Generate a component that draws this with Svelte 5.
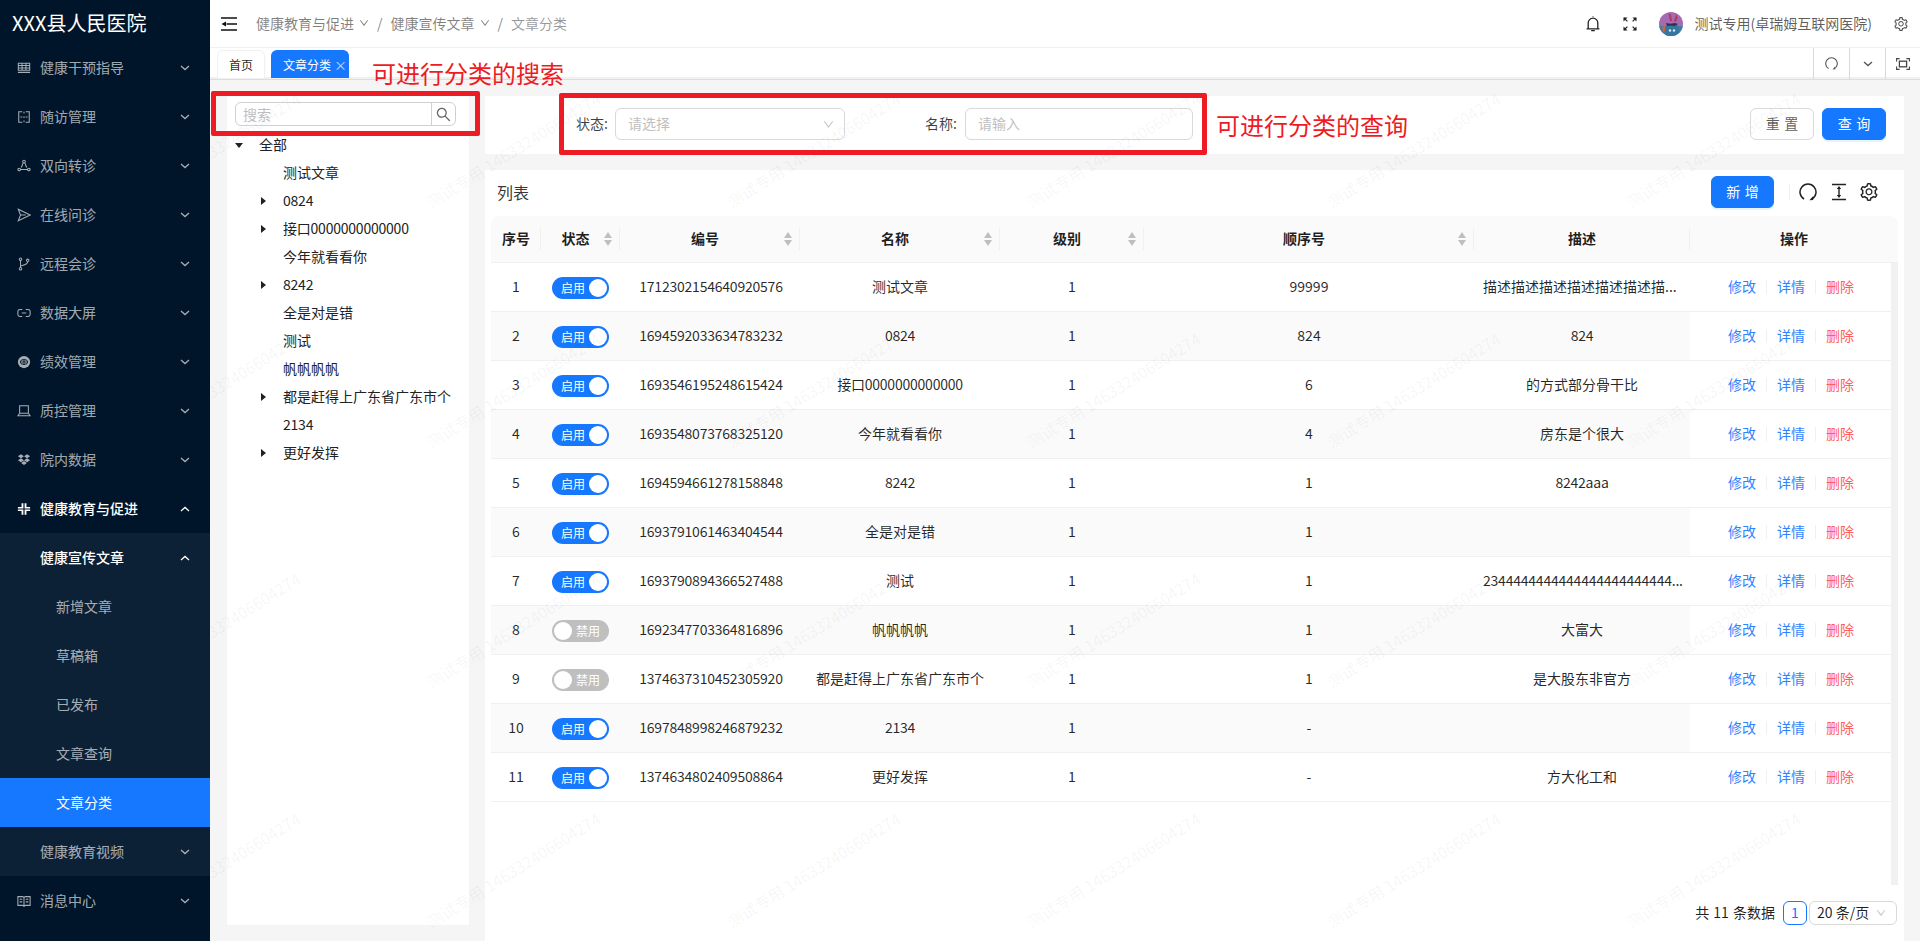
<script lang="ts">
	// sidebar icons, 16x16, stroked unless drawn inline in the markup
	const icons: Record<string, string> = {
		table: 'M1.5 2.5h13v8h-13z M1.5 5.2h13 M1.5 7.9h13 M5.8 2.5v8 M10.2 2.5v8 M1 13h14',
		split: 'M6 2H2v12h4 M10 2h4v12h-4 M8 2v2 M8 7v2 M8 12v2 M4 8h2 M10 8h2',
		deploy: 'M6.8 5L5 9.7 M9.2 5L11 9.7 M4.3 12h7.4 M9.5 3a1.5 1.5 0 1 1-3 0 1.5 1.5 0 0 1 3 0z M4 12a1.5 1.5 0 1 1-3 0 1.5 1.5 0 0 1 3 0z M15 12a1.5 1.5 0 1 1-3 0 1.5 1.5 0 0 1 3 0z',
		send: 'M1.5 1.5L15 8 1.5 14.5 4 8z M4 8h6',
		branch: 'M4 4v8 M12.2 5.3c0 3.2-4.2 3.7-8.2 5 M5.4 2.6a1.4 1.4 0 1 1-2.8 0 1.4 1.4 0 0 1 2.8 0z M5.4 13.4a1.4 1.4 0 1 1-2.8 0 1.4 1.4 0 0 1 2.8 0z M13.6 3.8a1.4 1.4 0 1 1-2.8 0 1.4 1.4 0 0 1 2.8 0z',
		link: 'M6 4H3.2A2.2 2.2 0 0 0 1 6.2v3.6A2.2 2.2 0 0 0 3.2 12H6 M10 4h2.8A2.2 2.2 0 0 1 15 6.2v3.6a2.2 2.2 0 0 1-2.2 2.2H10 M5.5 8h5',
		laptop: 'M3 2h10v8.5H3z M3 10.5L1 13.5h14l-2-3',
		book: 'M1 3h5.5L8 4l1.5-1H15v10H9.5L8 14l-1.5-1H1z M8 4v10 M3 6h3 M3 9h3 M10 6h3 M10 9h3'
	};

	const menu = [
		{ label: '健康干预指导', icon: 'table' },
		{ label: '随访管理', icon: 'split' },
		{ label: '双向转诊', icon: 'deploy' },
		{ label: '在线问诊', icon: 'send' },
		{ label: '远程会诊', icon: 'branch' },
		{ label: '数据大屏', icon: 'link' },
		{ label: '绩效管理', icon: 'coin' },
		{ label: '质控管理', icon: 'laptop' },
		{ label: '院内数据', icon: 'dropbox' },
		{ label: '健康教育与促进', icon: 'slack', open: true },
		{ label: '健康宣传文章', sub: true, open: true },
		{ label: '新增文章', sub: true, leaf: true },
		{ label: '草稿箱', sub: true, leaf: true },
		{ label: '已发布', sub: true, leaf: true },
		{ label: '文章查询', sub: true, leaf: true },
		{ label: '文章分类', sub: true, leaf: true, active: true },
		{ label: '健康教育视频', sub: true },
		{ label: '消息中心', icon: 'book' }
	];

	const tree = [
		{ label: '全部', depth: 0, caret: 'down' },
		{ label: '测试文章', depth: 1 },
		{ label: '0824', depth: 1, caret: 'right' },
		{ label: '接口0000000000000', depth: 1, caret: 'right' },
		{ label: '今年就看看你', depth: 1 },
		{ label: '8242', depth: 1, caret: 'right' },
		{ label: '全是对是错', depth: 1 },
		{ label: '测试', depth: 1 },
		{ label: '帆帆帆帆', depth: 1 },
		{ label: '都是赶得上广东省广东市个', depth: 1, caret: 'right' },
		{ label: '2134', depth: 1 },
		{ label: '更好发挥', depth: 1, caret: 'right' }
	];

	const columns = [
		{ title: '序号', width: 50 },
		{ title: '状态', width: 79, sort: true },
		{ title: '编号', width: 180, sort: true },
		{ title: '名称', width: 200, sort: true },
		{ title: '级别', width: 144, sort: true },
		{ title: '顺序号', width: 330, sort: true },
		{ title: '描述', width: 216 },
		{ title: '操作', width: 201 }
	];

	const rows = [
		{ on: true, code: '1712302154640920576', name: '测试文章', level: '1', order: '99999', desc: '描述描述描述描述描述描述描...' },
		{ on: true, code: '1694592033634783232', name: '0824', level: '1', order: '824', desc: '824' },
		{ on: true, code: '1693546195248615424', name: '接口0000000000000', level: '1', order: '6', desc: '的方式部分骨干比' },
		{ on: true, code: '1693548073768325120', name: '今年就看看你', level: '1', order: '4', desc: '房东是个很大' },
		{ on: true, code: '1694594661278158848', name: '8242', level: '1', order: '1', desc: '8242aaa' },
		{ on: true, code: '1693791061463404544', name: '全是对是错', level: '1', order: '1', desc: '' },
		{ on: true, code: '1693790894366527488', name: '测试', level: '1', order: '1', desc: '2344444444444444444444444...' },
		{ on: false, code: '1692347703364816896', name: '帆帆帆帆', level: '1', order: '1', desc: '大富大' },
		{ on: false, code: '1374637310452305920', name: '都是赶得上广东省广东市个', level: '1', order: '1', desc: '是大股东非官方' },
		{ on: true, code: '1697848998246879232', name: '2134', level: '1', order: '-', desc: '' },
		{ on: true, code: '1374634802409508864', name: '更好发挥', level: '1', order: '-', desc: '方大化工和' }
	];

	// watermark tiles, measured from the content area's top-left corner
	const watermarks: { left: number; top: number }[] = [];
	for (let x = 129; x < 1920; x += 300) {
		for (let y = 203; y < 1100; y += 240) {
			watermarks.push({ left: x + 84 - 100 - 210, top: y - 53 - 10 - 80 });
		}
	}

	const hasDigits = (s: string) => /\d/.test(s);
</script>

{#snippet chevron(up = false)}
	<svg class="chevron" class:up viewBox="0 0 10 6" width="10" height="6" aria-hidden="true">
		<path d="M1 1l4 3.6L9 1" fill="none" stroke="currentColor" stroke-width="1.3" />
	</svg>
{/snippet}

{#snippet thin(w = 10)}
	<svg class="thin-down" viewBox="64 64 896 896" width={w} height={w} aria-hidden="true">
		<path fill="currentColor" d="M884 256h-75c-5.1 0-9.9 2.5-12.9 6.6L512 654.2 227.9 262.6c-3-4.1-7.8-6.6-12.9-6.6h-75c-6.5 0-10.3 7.4-6.5 12.7l352.6 486.1c12.8 17.6 39 17.6 51.7 0l352.6-486.1c3.9-5.3.1-12.7-6.4-12.7z" />
	</svg>
{/snippet}

{#snippet gear(size = 16)}
	<svg viewBox="64 64 896 896" width={size} height={size} aria-hidden="true">
		<path fill="currentColor" d="M924.8 625.7l-65.5-56c3.1-19 4.7-38.4 4.7-57.8s-1.6-38.8-4.7-57.8l65.5-56a32.03 32.03 0 0 0 9.3-35.2l-.9-2.6a443.74 443.74 0 0 0-79.7-137.9l-1.8-2.1a32.12 32.12 0 0 0-35.1-9.5l-81.3 28.9c-30-24.6-63.5-44-99.7-57.6l-15.7-85a32.05 32.05 0 0 0-25.8-25.7l-2.7-.5c-52.1-9.4-106.9-9.4-159 0l-2.7.5a32.05 32.05 0 0 0-25.8 25.7l-15.8 85.4a351.86 351.86 0 0 0-99 57.4l-81.9-29.1a32 32 0 0 0-35.1 9.5l-1.8 2.1a446.02 446.02 0 0 0-79.7 137.9l-.9 2.6c-4.5 12.5-.8 26.5 9.3 35.2l66.3 56.6c-3.1 18.8-4.6 38-4.6 57.1 0 19.2 1.5 38.4 4.6 57.1L99 625.5a32.03 32.03 0 0 0-9.3 35.2l.9 2.6c18.1 50.4 44.9 96.9 79.7 137.9l1.8 2.1a32.12 32.12 0 0 0 35.1 9.5l81.9-29.1c29.8 24.5 63.1 43.9 99 57.4l15.8 85.4a32.05 32.05 0 0 0 25.8 25.7l2.7.5a449.4 449.4 0 0 0 159 0l2.7-.5a32.05 32.05 0 0 0 25.8-25.7l15.7-85a350 350 0 0 0 99.7-57.6l81.3 28.9a32 32 0 0 0 35.1-9.5l1.8-2.1c34.8-41.1 61.6-87.5 79.7-137.9l.9-2.6c4.5-12.3.8-26.3-9.3-35zM788.3 465.9c2.5 15.1 3.8 30.6 3.8 46.1s-1.3 31-3.8 46.1l-6.6 40.1 74.7 63.9a370.03 370.03 0 0 1-42.6 73.6L721 702.8l-31.4 25.8c-23.9 19.6-50.5 35-79.3 45.8l-38.1 14.3-17.9 97a377.5 377.5 0 0 1-85 0l-17.9-97.2-37.8-14.5c-28.5-10.8-55-26.2-78.7-45.7l-31.4-25.9-93.4 33.2c-17-22.9-31.2-47.6-42.6-73.6l75.5-64.5-6.5-40c-2.4-14.9-3.7-30.3-3.7-45.5 0-15.3 1.2-30.6 3.7-45.5l6.5-40-75.5-64.5c11.3-26.1 25.6-50.7 42.6-73.6l93.4 33.2 31.4-25.9c23.7-19.5 50.2-34.9 78.7-45.7l37.9-14.3 17.9-97.2c28.1-3.2 56.8-3.2 85 0l17.9 97 38.1 14.3c28.7 10.8 55.4 26.2 79.3 45.8l31.4 25.8 92.8-32.9c17 22.9 31.2 47.6 42.6 73.6L781.8 426l6.5 39.9zM512 326c-97.2 0-176 78.8-176 176s78.8 176 176 176 176-78.8 176-176-78.8-176-176-176zm79.2 255.2A111.6 111.6 0 0 1 512 614c-29.9 0-58-11.7-79.2-32.8A111.6 111.6 0 0 1 400 502c0-29.9 11.7-58 32.8-79.2C454 401.6 482.1 390 512 390c29.9 0 58 11.6 79.2 32.8A111.6 111.6 0 0 1 624 502c0 29.9-11.7 58-32.8 79.2z" />
	</svg>
{/snippet}

{#snippet refresh(size = 18)}
	<svg viewBox="0 0 18 18" width={size} height={size} aria-hidden="true">
		<path d="M5 16A8 8 0 1 1 13 16" fill="none" stroke="currentColor" stroke-width="1.5" />
		<path d="M10.4 17.2l3.8-.2-.2-3.8z" fill="currentColor" />
	</svg>
{/snippet}

<div class="app">
	<aside class="sider">
		<div class="brand">XXX县人民医院</div>
		{#each menu as item}
			<div class="menu-item" class:sub={item.sub} class:leaf={item.leaf} class:open={item.open} class:active={item.active}>
				{#if item.icon}
					<svg class="menu-icon" viewBox="0 0 16 16" width="16" height="16" aria-hidden="true">
						{#if item.icon === 'coin'}
							<circle cx="8" cy="8" r="7" fill="currentColor" />
							<ellipse cx="8" cy="8" rx="4.2" ry="2.8" fill="none" stroke="#001529" stroke-width="1.1" />
							<path d="M8 5.2v5.6 M5 8h6" stroke="#001529" stroke-width="1" />
						{:else if item.icon === 'dropbox'}
							<path fill="currentColor" d="M4.5 1.5L8 3.8 4.5 6 1 3.8z M11.5 1.5L15 3.8 11.5 6 8 3.8z M4.5 6L8 8.3 4.5 10.5 1 8.3z M11.5 6L15 8.3 11.5 10.5 8 8.3z M8 9.2l3.3 2.1L8 13.6l-3.3-2.3z" />
						{:else if item.icon === 'slack'}
							<path fill="currentColor" d="M1 5.8h6.3v1.6H1z M8.7 5.8H15v1.6H8.7z M1 8.6h6.3v1.6H1z M8.7 8.6H15v1.6H8.7z M5.2 1.5h2.1v4.3H5.2z M8.7 1.5h2.1v4.3H8.7z M5.2 10.2h2.1v4.3H5.2z M8.7 10.2h2.1v4.3H8.7z" />
						{:else}
							<path d={icons[item.icon]} fill="none" stroke="currentColor" stroke-width="1.2" />
						{/if}
					</svg>
				{/if}
				<span class="menu-label">{item.label}</span>
				{#if !item.leaf}
					{@render chevron(item.open)}
				{/if}
			</div>
		{/each}
	</aside>

	<div class="main">
		<header class="topbar">
			<svg class="fold" viewBox="0 0 16 14" width="16" height="14" aria-hidden="true">
				<path d="M0 1h16 M5.5 7H16 M0 13h16" stroke="#111" stroke-width="1.4" fill="none" />
				<path d="M0.5 7L5 4.4v5.2z" fill="#111" />
			</svg>
			<nav class="crumbs">
				<span>健康教育与促进</span>{@render thin()}
				<i>/</i>
				<span>健康宣传文章</span>{@render thin()}
				<i>/</i>
				<span class="current">文章分类</span>
			</nav>
			<div class="top-actions">
				<svg viewBox="0 0 14 16" width="14" height="16" aria-hidden="true">
					<path d="M2.2 12.5V7a4.8 4.8 0 0 1 9.6 0v5.5 M.6 12.8h12.8 M5.2 14.6h3.6 M7 1V.4" fill="none" stroke="#222" stroke-width="1.3" />
				</svg>
				<svg class="expand" viewBox="0 0 14 14" width="14" height="14" aria-hidden="true">
					<path d="M1 1l3.4 3.4 M13 1L9.6 4.4 M1 13l3.4-3.4 M13 13L9.6 9.6" stroke="#222" stroke-width="1.2" />
					<path d="M.5.5h4l-4 4z M13.5.5h-4l4 4z M.5 13.5h4l-4-4z M13.5 13.5h-4l4-4z" fill="#222" />
				</svg>
				<svg class="avatar" viewBox="0 0 24 24" width="24" height="24" aria-hidden="true">
					<defs><clipPath id="avatar-clip"><circle cx="12" cy="12" r="12" /></clipPath></defs>
					<g clip-path="url(#avatar-clip)">
						<rect width="24" height="24" fill="#a56bb0" />
						<rect y="14" width="24" height="10" fill="#3d7fa6" />
						<path d="M6 24c-1-9 2-13 7-13s8 4 7 13z" fill="#35789f" />
						<path d="M11 9L9.5 1 12 3l1 6z M15 9l2.5-7 1 4-2 4z" fill="#b8325e" />
						<path d="M7 11l5 1 4-1 3 1-3 2-4-.5-4 .5z" fill="#3a2a4d" />
						<path d="M3 15l3-1v5l-2 1z" fill="#d0653c" />
						<circle cx="11" cy="18.5" r="1.2" fill="#dfe8ee" />
						<circle cx="15" cy="18.5" r="1.2" fill="#dfe8ee" />
					</g>
				</svg>
				<span class="user">测试专用(卓瑞姆互联网医院)</span>
				<span class="top-gear">{@render gear(14)}</span>
			</div>
		</header>

		<div class="tabbar">
			<div class="tabs">
				<div class="tab">首页</div>
				<div class="tab active">文章分类<span class="close">×</span></div>
			</div>
			<div class="tab-tools">
				<div class="tool">{@render refresh(13)}</div>
				<div class="tool">{@render chevron()}</div>
				<div class="tool">
					<svg viewBox="0 0 14 12" width="14" height="12" aria-hidden="true">
						<path d="M.6 3.4V.6h3 M10.4.6h3v2.8 M13.4 8.6v2.8h-3 M3.6 11.4h-3V8.6" fill="none" stroke="#444" stroke-width="1.1" />
						<rect x="3.4" y="3.2" width="7.2" height="5.6" fill="none" stroke="#444" stroke-width="1.3" />
					</svg>
				</div>
			</div>
		</div>

		<div class="content">
			<section class="tree-panel">
				<div class="tree-search">
					<span class="tree-placeholder">搜索</span>
					<span class="tree-search-btn">
						<svg viewBox="64 64 896 896" width="15" height="15" aria-hidden="true">
							<path fill="#666" d="M909.6 854.5L649.9 594.8C690.2 542.7 712 479 712 412c0-80.2-31.3-155.4-87.9-212.1-56.6-56.7-132-87.9-212.1-87.9s-155.5 31.3-212.1 87.9C143.2 256.5 112 331.8 112 412c0 80.1 31.3 155.5 87.9 212.1C256.5 680.8 331.8 712 412 712c67 0 130.6-21.8 182.7-62l259.7 259.6a8.2 8.2 0 0 0 11.6 0l43.6-43.5a8.2 8.2 0 0 0 0-11.6zM570.4 570.4C528 612.7 471.8 636 412 636s-116-23.3-158.4-65.6C211.3 528 188 471.8 188 412s23.3-116.1 65.6-158.4C296 211.3 352.2 188 412 188s116.1 23.2 158.4 65.6S636 352.2 636 412s-23.3 116.1-65.6 158.4z" />
						</svg>
					</span>
				</div>
				<ul class="tree">
					{#each tree as node}
						<li class:depth-1={node.depth === 1}>
							<span class="switcher">
								{#if node.caret === 'down'}
									<svg viewBox="0 0 8 5" width="8" height="5" aria-hidden="true"><path d="M0 0h8L4 5z" fill="#222" /></svg>
								{:else if node.caret === 'right'}
									<svg viewBox="0 0 5 8" width="5" height="8" aria-hidden="true"><path d="M0 0v8l5-4z" fill="#222" /></svg>
								{/if}
							</span>
							<span class="tree-label" class:digits={hasDigits(node.label)}>{node.label}</span>
						</li>
					{/each}
				</ul>
			</section>

			<div class="right">
				<section class="filters">
					<label class="field-label" for="filter-status">状态:</label>
					<div id="filter-status" class="select">
						<span class="lifted">请选择</span>
						{@render thin(11)}
					</div>
					<label class="field-label name-label" for="filter-name">名称:</label>
					<div id="filter-name" class="input"><span class="lifted">请输入</span></div>
					<div class="filter-buttons">
						<button class="btn" type="button">重 置</button>
						<button class="btn primary" type="button">查 询</button>
					</div>
				</section>

				<section class="card">
					<div class="card-head">
						<span class="card-title">列表</span>
						<button class="btn primary add" type="button">新 增</button>
						<span class="head-sep"></span>
						<span class="head-icon">{@render refresh(18)}</span>
						<span class="head-icon">
							<svg viewBox="0 0 16 18" width="16" height="18" aria-hidden="true">
								<path d="M1 1.5h14 M1 16.5h14 M8 4v10" stroke="#222" stroke-width="1.4" fill="none" />
								<path d="M8 3l2.2 3H5.8z M8 15l2.2-3H5.8z" fill="#222" />
							</svg>
						</span>
						<span class="head-icon gear">{@render gear(18)}</span>
					</div>

					<table class="thead">
						<colgroup>
							{#each columns as col, i}
								<col style:width="{i === columns.length - 1 ? col.width + 7 : col.width}px" />
							{/each}
						</colgroup>
						<thead>
							<tr>
								{#each columns as col}
									<th>
										<div class="th-inner" class:sortable={col.sort}>
											<span class="th-title">{col.title}</span>
											{#if col.sort}
												<svg class="sorter" viewBox="0 0 8 14" width="8" height="14" aria-hidden="true">
													<path d="M4 0l4 6H0z M4 14l4-6H0z" fill="#bfbfbf" />
												</svg>
											{/if}
										</div>
									</th>
								{/each}
							</tr>
						</thead>
					</table>

					<div class="tbody-wrap">
						<table class="tbody">
							<colgroup>
								{#each columns as col}
									<col style:width="{col.width}px" />
								{/each}
							</colgroup>
							<tbody>
								{#each rows as row, i}
									<tr>
										<td>{i + 1}</td>
										<td class="switch-cell">
											<span class="switch" class:off={!row.on}>
												<span class="switch-text">{row.on ? '启用' : '禁用'}</span>
												<span class="switch-handle"></span>
											</span>
										</td>
										<td class="digits code">{row.code}</td>
										<td class:digits={hasDigits(row.name)}>{row.name}</td>
										<td>{row.level}</td>
										<td>{row.order}</td>
										<td class:digits={hasDigits(row.desc)} class:clipped={row.desc.endsWith('...')}>{row.desc}</td>
										<td class="ops">
											<span class="op">修改</span><span class="op-sep"></span><span class="op">详情</span><span class="op-sep"></span><span class="op danger">删除</span>
										</td>
									</tr>
								{/each}
							</tbody>
						</table>
						<div class="track"></div>
					</div>

					<div class="pager">
						<span class="total lifted">共 11 条数据</span>
						<span class="page-num"><span class="lifted">1</span></span>
						<span class="page-size"><span class="lifted">20 条/页</span>{@render thin(10)}</span>
					</div>
				</section>
			</div>

			<div class="watermarks" aria-hidden="true">
				{#each watermarks as w}
					<span class="watermark" style:left="{w.left}px" style:top="{w.top}px">测试专用 146332406604274</span>
				{/each}
			</div>
		</div>

		<div class="mark mark-search"></div>
		<div class="mark mark-filter"></div>
		<div class="mark-text mark-text-search">可进行分类的搜索</div>
		<div class="mark-text mark-text-filter">可进行分类的查询</div>
	</div>
</div>

<style>
	:global(body) {
		margin: 0;
		font-family: 'Noto Sans CJK SC', 'Noto Sans', sans-serif;
		font-size: 14px;
		color: rgba(0, 0, 0, 0.88);
	}

	.app {
		display: flex;
		height: 941px;
		overflow: hidden;
	}

	/* Noto CJK sits about a pixel low compared with the reference font */
	.lifted {
		padding-bottom: 2px;
	}

	.sider {
		width: 210px;
		flex-shrink: 0;
		background: #001529;
		color: rgba(255, 255, 255, 0.65);
		line-height: 20px;
	}

	.brand {
		height: 43px;
		padding: 0 0 0 12px;
		line-height: 46px;
		font-size: 20px;
		color: #fff;
		white-space: nowrap;
	}

	.menu-item {
		display: flex;
		align-items: center;
		height: 49px;
		padding: 0 20px 0 17px;
	}

	.menu-label {
		padding-bottom: 2px;
	}

	.menu-icon {
		width: 14px;
		height: 14px;
		margin-right: 9px;
		flex-shrink: 0;
	}

	.menu-item.open {
		color: #fff;
		font-weight: 500;
	}

	.menu-item.sub {
		background: #0d2136;
		padding-left: 40px;
	}

	.menu-item.leaf {
		padding-left: 56px;
		font-weight: 400;
	}

	.menu-item.active {
		background: #1677ff;
		color: #fff;
	}

	.chevron {
		color: inherit;
	}

	.menu-item .chevron {
		margin-left: auto;
	}

	.chevron.up {
		transform: rotate(180deg);
	}

	.main {
		flex: 1;
		min-width: 0;
		display: flex;
		flex-direction: column;
		position: relative;
	}

	.topbar {
		display: flex;
		align-items: center;
		height: 47px;
		padding: 0 12px 0 11px;
		border-bottom: 1px solid #f0f0f0;
	}

	.crumbs {
		display: flex;
		align-items: center;
		margin-left: 19px;
		padding-bottom: 2px;
		color: rgba(0, 0, 0, 0.5);
		line-height: 20px;
	}

	.crumbs .thin-down {
		margin-left: 5px;
	}

	.crumbs i {
		font-style: normal;
		margin: 0 8px;
	}

	.crumbs .current {
		color: rgba(0, 0, 0, 0.42);
	}

	.top-actions {
		display: flex;
		align-items: center;
		margin-left: auto;
		color: #444;
	}

	.expand {
		margin-left: 23px;
	}

	.avatar {
		margin-left: 22px;
	}

	.user {
		margin-left: 12px;
		padding-bottom: 2px;
		line-height: 20px;
		color: rgba(0, 0, 0, 0.65);
	}

	.top-gear {
		display: flex;
		margin-left: 22px;
		color: #555;
	}

	.tabbar {
		display: flex;
		justify-content: space-between;
		height: 32px;
		border-bottom: 1px solid #ddd;
		box-shadow: inset 0 -2px 0 #f0f0f0;
		box-sizing: border-box;
	}

	.tabs {
		display: flex;
		gap: 6px;
		padding: 2px 0 0 7px;
	}

	.tab {
		display: flex;
		align-items: center;
		justify-content: center;
		width: 48px;
		height: 28px;
		box-sizing: border-box;
		border: 1px solid #f0f0f0;
		border-bottom: 0;
		border-radius: 6px 6px 0 0;
		font-size: 12px;
		background: #fff;
		color: rgba(0, 0, 0, 0.88);
	}

	.tab.active {
		width: 78px;
		justify-content: flex-start;
		padding-left: 11px;
		border-color: #1677ff;
		background: #1677ff;
		color: #fff;
	}

	.close {
		margin-left: 3px;
		font-size: 13px;
		line-height: 12px;
		color: rgba(255, 255, 255, 0.75);
	}

	.tab-tools {
		display: flex;
	}

	.tool {
		display: flex;
		align-items: center;
		justify-content: center;
		width: 36px;
		box-sizing: border-box;
		border-left: 1px solid #d9d9d9;
		color: #555;
	}

	.tool:last-child {
		width: 35px;
	}

	.content {
		flex: 1;
		min-height: 0;
		display: flex;
		gap: 16px;
		padding: 16px 16px 0 17px;
		background: #f5f5f5;
		position: relative;
		overflow: hidden;
	}

	.tree-panel {
		width: 242px;
		height: 829px;
		flex-shrink: 0;
		background: #fff;
		box-sizing: border-box;
	}

	.tree-search {
		display: flex;
		align-items: center;
		justify-content: space-between;
		height: 24px;
		margin: 6px 13px 5px 8px;
		box-sizing: border-box;
		border: 1px solid #d0d0d0;
		border-radius: 6px;
	}

	.tree-placeholder {
		margin-left: 7px;
		color: #bfbfbf;
		line-height: 20px;
	}

	.tree-search-btn {
		display: flex;
		align-items: center;
		justify-content: center;
		width: 23px;
		height: 22px;
		border-left: 1px solid #d0d0d0;
	}

	.tree {
		list-style: none;
		margin: 0;
		padding: 0;
	}

	.tree li {
		display: flex;
		align-items: center;
		height: 28px;
		line-height: 20px;
		color: #222;
	}

	.tree li.depth-1 {
		padding-left: 24px;
	}

	.switcher {
		display: flex;
		align-items: center;
		justify-content: center;
		width: 24px;
		margin-right: 8px;
	}

	.tree-label {
		white-space: nowrap;
		padding-bottom: 2px;
	}

	.digits {
		letter-spacing: -0.22px;
	}

	.right {
		flex: 1;
		min-width: 0;
		display: flex;
		flex-direction: column;
		gap: 16px;
	}

	.filters {
		display: flex;
		align-items: flex-start;
		height: 58px;
		flex-shrink: 0;
		box-sizing: border-box;
		padding: 12px 18px 0 91px;
		background: #fff;
	}

	.field-label {
		width: 39px;
		line-height: 30px;
		color: rgba(0, 0, 0, 0.75);
		white-space: nowrap;
	}

	.name-label {
		margin-left: 80px;
		width: 40px;
	}

	.select,
	.input {
		display: flex;
		align-items: center;
		justify-content: space-between;
		height: 32px;
		box-sizing: border-box;
		border: 1px solid #d9d9d9;
		border-radius: 6px;
		padding: 0 12px;
		color: #bfbfbf;
		line-height: 20px;
	}

	.select {
		width: 230px;
		padding-right: 10px;
	}

	.input {
		width: 228px;
	}

	.filter-buttons {
		display: flex;
		gap: 8px;
		margin-left: auto;
	}

	.btn {
		width: 64px;
		height: 32px;
		padding: 0 0 2px;
		border: 1px solid #d9d9d9;
		border-radius: 6px;
		background: #fff;
		font: inherit;
		word-spacing: 1.5px;
		color: rgba(0, 0, 0, 0.65);
		cursor: pointer;
	}

	.btn.primary {
		border-color: #1677ff;
		background: #1677ff;
		color: #fff;
		box-shadow: 0 2px 0 rgba(5, 145, 255, 0.1);
	}

	.card {
		flex: 1;
		min-height: 0;
		display: flex;
		flex-direction: column;
		background: #fff;
		padding: 0 6px;
	}

	.card-head {
		display: flex;
		align-items: center;
		height: 46px;
		flex-shrink: 0;
		box-sizing: border-box;
		padding: 0 0 2px 6px;
	}

	.card-title {
		font-size: 16px;
		line-height: 24px;
		color: rgba(0, 0, 0, 0.8);
	}

	.add {
		margin-left: auto;
		width: 63px;
	}

	.head-sep {
		width: 1px;
		height: 16px;
		margin: 0 9px 0 15px;
		background: #f0f0f0;
	}

	.head-icon {
		display: flex;
		color: #222;
		margin-right: 14px;
	}

	.head-icon.gear {
		margin-left: -1px;
		margin-right: 20px;
	}

	table {
		border-collapse: separate;
		table-layout: fixed;
		border-spacing: 0;
	}

	.thead {
		width: 1407px;
		flex-shrink: 0;
	}

	th {
		position: relative;
		height: 47px;
		padding: 0;
		background: #fafafa;
		border-bottom: 1px solid #f0f0f0;
		font-weight: 600;
		box-sizing: border-box;
		line-height: 20px;
		text-align: center;
	}

	th:first-child {
		border-top-left-radius: 8px;
	}

	th:last-child {
		border-top-right-radius: 8px;
	}

	th:not(:last-child)::after {
		content: '';
		position: absolute;
		right: 0;
		top: 12px;
		height: 22px;
		width: 1px;
		background: #f0f0f0;
	}

	.th-inner {
		display: flex;
		align-items: center;
		justify-content: center;
	}

	.th-inner.sortable {
		padding: 0 8px 0 6px;
	}

	.th-title {
		flex: 1;
		padding-bottom: 2px;
	}

	.tbody-wrap {
		display: flex;
		height: 622px;
		flex-shrink: 0;
		width: 1407px;
		overflow: hidden;
	}

	.tbody {
		width: 1400px;
		height: 0;
	}

	.track {
		width: 7px;
		flex-shrink: 0;
		background: #f1f1f1;
	}

	td {
		height: 49px;
		box-sizing: border-box;
		padding: 0 8px 2px;
		border-bottom: 1px solid #f0f0f0;
		text-align: center;
		line-height: 20px;
		white-space: nowrap;
		color: rgba(0, 0, 0, 0.85);
	}

	td.switch-cell {
		padding-bottom: 0;
	}

	td.code {
		padding-left: 10px;
		padding-right: 8px;
	}

	td.clipped {
		padding-left: 9px;
		padding-right: 0;
		text-align: left;
	}

	tbody tr:nth-child(even) td {
		background: #fafafa;
	}

	tbody tr td.ops {
		background: #fff;
		padding: 0 0 2px 38px;
		text-align: left;
	}

	.switch {
		display: inline-flex;
		align-items: center;
		justify-content: space-between;
		vertical-align: middle;
		width: 57px;
		height: 22px;
		box-sizing: border-box;
		padding: 0 2px 0 9px;
		border-radius: 11px;
		background: #1677ff;
	}

	.switch.off {
		flex-direction: row-reverse;
		padding: 0 9px 0 2px;
		background: #bfbfbf;
	}

	.switch-text {
		font-size: 12px;
		line-height: 16px;
		color: #fff;
	}

	.switch-handle {
		width: 18px;
		height: 18px;
		border-radius: 50%;
		background: #fff;
	}

	.op {
		color: #1677ff;
		opacity: 0.9;
	}

	.op.danger {
		color: #ff4d4f;
	}

	.op-sep {
		display: inline-block;
		width: 1px;
		height: 14px;
		margin: 0 10px;
		vertical-align: -2px;
		background: #f0f0f0;
	}

	.pager {
		display: flex;
		align-items: center;
		justify-content: flex-end;
		height: 24px;
		margin-top: 16px;
		padding-right: 1px;
		line-height: 20px;
		flex-shrink: 0;
	}

	.total {
		word-spacing: 1px;
	}

	.page-num {
		display: flex;
		align-items: center;
		justify-content: center;
		width: 24px;
		height: 24px;
		margin-left: 8px;
		box-sizing: border-box;
		border: 1px solid #1677ff;
		border-radius: 6px;
		color: #1677ff;
	}

	.page-size {
		display: flex;
		align-items: center;
		justify-content: space-between;
		width: 88px;
		height: 24px;
		margin-left: 2px;
		box-sizing: border-box;
		border: 1px solid #d9d9d9;
		border-radius: 6px;
		padding: 0 10px 0 7px;
		white-space: nowrap;
	}

	.page-size .thin-down {
		color: #bfbfbf;
	}

	.watermarks {
		position: absolute;
		inset: 0;
		pointer-events: none;
	}

	.watermark {
		position: absolute;
		width: 200px;
		height: 20px;
		white-space: nowrap;
		font-size: 16px;
		line-height: 20px;
		color: rgba(0, 0, 0, 0.05);
		transform: rotate(-32deg);
	}

	.mark {
		position: absolute;
		box-sizing: border-box;
		border: 5px solid #ed1c24;
		border-radius: 2px;
		pointer-events: none;
	}

	.mark-search {
		left: 1px;
		top: 91px;
		width: 269px;
		height: 45px;
	}

	.mark-filter {
		left: 349px;
		top: 93px;
		width: 648px;
		height: 62px;
	}

	.mark-text {
		position: absolute;
		font-size: 24px;
		line-height: 28px;
		color: #ed1c24;
		white-space: nowrap;
		pointer-events: none;
	}

	.mark-text-search {
		left: 162px;
		top: 59px;
	}

	.mark-text-filter {
		left: 1006px;
		top: 111px;
	}
</style>
